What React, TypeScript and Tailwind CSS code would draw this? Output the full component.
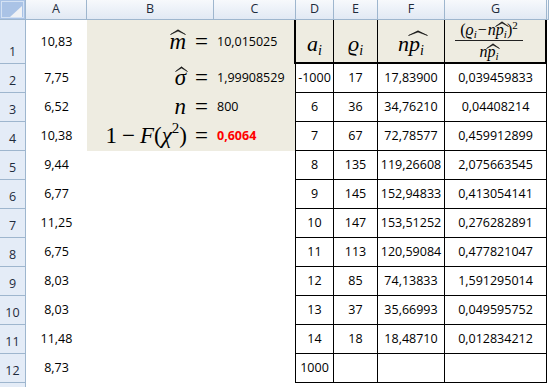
import React from "react";

const num = { fontFamily: '"Open Sans", "Liberation Sans", sans-serif' };
const math = { fontFamily: '"Liberation Serif", "DejaVu Serif", serif' };

const colA = ["10,83", "7,75", "6,52", "10,38", "9,44", "6,77", "11,25", "6,75", "8,03", "8,03", "11,48", "8,73"];
const tbl: string[][] = [
  ["-1000", "17", "17,83900", "0,039459833"],
  ["6", "36", "34,76210", "0,04408214"],
  ["7", "67", "72,78577", "0,459912899"],
  ["8", "135", "119,26608", "2,075663545"],
  ["9", "145", "152,94833", "0,413054141"],
  ["10", "147", "153,51252", "0,276282891"],
  ["11", "113", "120,59084", "0,477821047"],
  ["12", "85", "74,13833", "1,591295014"],
  ["13", "37", "35,66993", "0,049595752"],
  ["14", "18", "18,48710", "0,012834212"],
  ["1000", "", "", ""],
];

function Hat({ w, top, left = 0, children }: { w: number; top: number; left?: number; children: React.ReactNode }) {
  return (
    <span className="relative inline-block">
      {children}
      <svg
        className="absolute"
        style={{ top, left }}
        width={w}
        height={6}
        viewBox={`0 0 ${w} 6`}
      >
        <path d={`M0.5 5.5 L${w / 2} 0.8 L${w - 0.5} 5.5 L${w / 2} 2 Z`} fill="#111" stroke="#111" strokeWidth={0.6} strokeLinejoin="round" />
      </svg>
    </span>
  );
}

const colHead = "flex items-center justify-center border-r border-b border-[#9eb6ce] bg-linear-to-b from-[#f7f9fc] to-[#e1e9f4] text-[12.5px] text-[#1e2b3c]";
const rowHead = "flex items-end justify-center pb-[1px] border-r border-b border-[#9eb6ce] bg-[#e4ecf7] text-[12.5px] text-[#1e2b3c]";

function Sub({ size, off, children }: { size: number; off: number; children: React.ReactNode }) {
  return (
    <span className="relative leading-none" style={{ fontSize: size, top: off }}>
      {children}
    </span>
  );
}

export default function App() {
  const letters = ["A", "B", "C", "D", "E", "F", "G", ""];
  return (
    <div className="w-[549px] h-[387px] overflow-hidden bg-white text-black" style={num}>
      <div className="grid grid-cols-[26px_61px_127px_82px_38px_44px_67px_102px_2px] grid-rows-[20px_44px_repeat(12,29px)]">
        {/* corner */}
        <div className="relative border-r border-b border-[#9eb6ce] bg-[#aac3e6]">
          <div className="absolute inset-[1px] border border-[#d4e2f4]" />
          <svg className="absolute" style={{ left: 10, top: 6 }} width={13} height={12} viewBox="0 0 13 12">
            <polygon points="12,0 12,11 0,11" fill="#f0f2f5" />
          </svg>
        </div>
        {letters.map((l, i) => (
          <div key={i} className={colHead}>{l}</div>
        ))}

        {/* row 1 */}
        <div className={rowHead}>1</div>
        <div className="flex items-center justify-center text-[12.5px]">{colA[0]}</div>
        <div className="flex items-center justify-end pr-[6px] bg-[#eeece1] text-[23px]" style={math}>
          <span className="italic"><Hat w={16} top={4} left={1}>m</Hat></span>
          <span className="ml-[9px]">=</span>
        </div>
        <div className="flex items-center pl-[3px] bg-[#eeece1] border-r-2 border-black text-[12.5px]">10,015025</div>
        <div className="flex items-center justify-center pt-[4px] bg-[#eeece1] border-r border-b-2 border-black text-[22px]" style={math}>
          <span className="italic">a<Sub size={14} off={4}>i</Sub></span>
        </div>
        <div className="flex items-center justify-center pt-[4px] bg-[#eeece1] border-r border-b-2 border-black text-[22px]" style={math}>
          <span className="italic">ϱ<Sub size={14} off={4}>i</Sub></span>
        </div>
        <div className="flex items-center justify-center pt-[4px] bg-[#eeece1] border-r border-b-2 border-black text-[22px]" style={math}>
          <span className="italic">n<Hat w={20} top={3} left={-1}>p<Sub size={14} off={4}>i</Sub></Hat></span>
        </div>
        <div className="flex flex-col items-center justify-center bg-[#eeece1] border-r-2 border-b-2 border-black pb-[1px] pr-[12px]" style={math}>
          <div className="text-[16px] leading-[18px] italic whitespace-nowrap mt-[1px]">
            <span className="not-italic">(</span>ϱ<Sub size={11} off={3}>i</Sub><span className="not-italic mx-[1px]">−</span>n<Hat w={14} top={0} left={-1}>p<Sub size={11} off={3}>i</Sub></Hat><span className="not-italic">)</span><Sub size={11} off={-6}><span className="not-italic">2</span></Sub>
          </div>
          <div className="w-[68px] h-[1px] bg-[#222] mt-[1px]" />
          <div className="text-[16px] leading-[18px] italic mt-[2px] whitespace-nowrap">
            n<Hat w={14} top={0} left={-1}>p<Sub size={11} off={3}>i</Sub></Hat>
          </div>
        </div>
        <div />

        {/* rows 2-12 */}
        {colA.slice(1).map((a, idx) => {
          const r = idx + 2;
          const t = tbl[idx];
          let bcell: React.ReactNode = null;
          let ccell: React.ReactNode = null;
          if (r === 2) {
            bcell = (
              <>
                <span className="italic"><Hat w={13} top={5} left={0}>σ</Hat></span>
                <span className="ml-[9px]">=</span>
              </>
            );
            ccell = "1,99908529";
          } else if (r === 3) {
            bcell = (
              <>
                <span className="italic">n</span>
                <span className="ml-[9px]">=</span>
              </>
            );
            ccell = "800";
          } else if (r === 4) {
            bcell = (
              <>
                <span>1</span>
                <span className="mx-[5px]">−</span>
                <span className="italic">F</span>
                <span>(</span>
                <span className="italic">χ</span>
                <Sub size={15} off={-8}>2</Sub>
                <span>)</span>
                <span className="ml-[8px]">=</span>
              </>
            );
            ccell = <span className="font-bold text-[#ff0000]">0,6064</span>;
          }
          const beige = r <= 4 ? "bg-[#eeece1]" : "";
          return (
            <React.Fragment key={r}>
              <div className={rowHead}>{r}</div>
              <div className="flex items-center justify-center text-[12.5px]">{a}</div>
              <div className={`flex items-center justify-end pr-[6px] text-[23px] whitespace-nowrap ${beige}`} style={math}>
                {bcell}
              </div>
              <div className={`flex items-center pl-[3px] text-[12.5px] border-r border-black whitespace-nowrap overflow-hidden ${beige}`}>
                {ccell}
              </div>
              {t.map((v, j) => (
                <div key={j} className="flex items-center justify-center text-[12.5px] border-r border-b border-black">
                  {v}
                </div>
              ))}
              <div />
            </React.Fragment>
          );
        })}

        {/* row 13 partial */}
        <div className="border-r border-[#9eb6ce] bg-[#e4ecf7]" />
        <div className="col-span-8" />
      </div>
    </div>
  );
}
